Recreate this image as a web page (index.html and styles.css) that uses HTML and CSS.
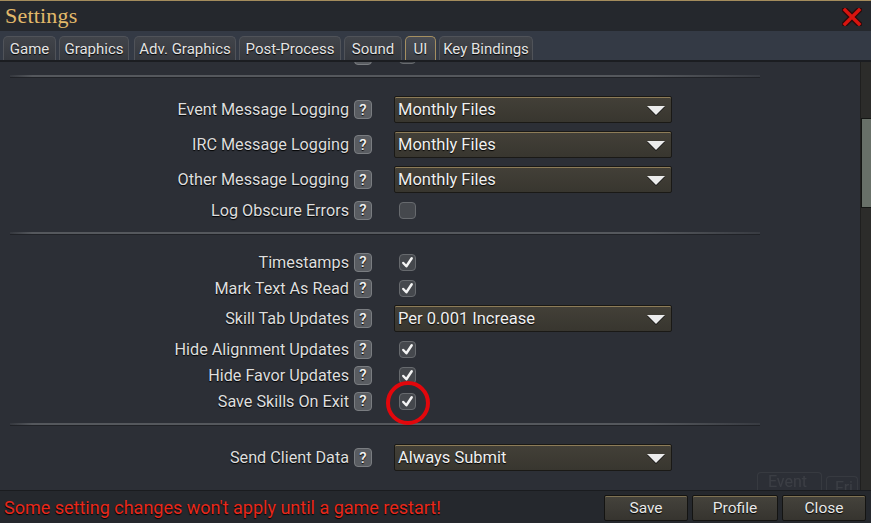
FILE: index.html
```html
<!DOCTYPE html>
<html>
<head>
<meta charset="utf-8">
<link rel="stylesheet" href="styles.css">
</head>
<body>
<div class="window">
  <header class="titlebar">
    <span class="title">Settings</span>
    <svg class="close" width="20" height="18" viewBox="0 0 20 18">
      <path d="M3 2 L17 16 M17 2 L3 16" stroke="#2a0a0a" stroke-width="6" stroke-linecap="square"/>
      <path d="M3 2 L17 16 M17 2 L3 16" stroke="#d8140f" stroke-width="3.4" stroke-linecap="square"/>
    </svg>
  </header>
  <nav class="tabs">
    <span class="tab t-game">Game</span>
    <span class="tab t-graphics">Graphics</span>
    <span class="tab t-adv">Adv. Graphics</span>
    <span class="tab t-post">Post-Process</span>
    <span class="tab t-sound">Sound</span>
    <span class="tab t-ui active">UI</span>
    <span class="tab t-keys">Key Bindings</span>
  </nav>
  <main class="body">
    <div class="scroll-area">
      <div class="list">
        <div class="row cb-row partial"><span class="label"></span><span class="help"></span><span class="check"></span></div>
        <div class="divider first"></div>

        <div class="row dd-row"><span class="label">Event Message Logging</span><span class="help">?</span><span class="dropdown">Monthly Files<i class="tri"></i></span></div>
        <div class="row dd-row"><span class="label">IRC Message Logging</span><span class="help">?</span><span class="dropdown">Monthly Files<i class="tri"></i></span></div>
        <div class="row dd-row"><span class="label">Other Message Logging</span><span class="help">?</span><span class="dropdown">Monthly Files<i class="tri"></i></span></div>
        <div class="row cb-row"><span class="label">Log Obscure Errors</span><span class="help">?</span><span class="check"></span></div>
        <div class="divider"></div>

        <div class="row cb-row"><span class="label">Timestamps</span><span class="help">?</span><span class="check on"><svg viewBox="0 0 16 16"><path d="M3.5 8.5 L6.8 12 L12.5 3.5" fill="none" stroke="#f4f4f4" stroke-width="2.6" stroke-linecap="round" stroke-linejoin="round"/></svg></span></div>
        <div class="row cb-row"><span class="label">Mark Text As Read</span><span class="help">?</span><span class="check on"><svg viewBox="0 0 16 16"><path d="M3.5 8.5 L6.8 12 L12.5 3.5" fill="none" stroke="#f4f4f4" stroke-width="2.6" stroke-linecap="round" stroke-linejoin="round"/></svg></span></div>
        <div class="row dd-row"><span class="label">Skill Tab Updates</span><span class="help">?</span><span class="dropdown">Per 0.001 Increase<i class="tri"></i></span></div>
        <div class="row cb-row"><span class="label">Hide Alignment Updates</span><span class="help">?</span><span class="check on"><svg viewBox="0 0 16 16"><path d="M3.5 8.5 L6.8 12 L12.5 3.5" fill="none" stroke="#f4f4f4" stroke-width="2.6" stroke-linecap="round" stroke-linejoin="round"/></svg></span></div>
        <div class="row cb-row"><span class="label">Hide Favor Updates</span><span class="help">?</span><span class="check on"><svg viewBox="0 0 16 16"><path d="M3.5 8.5 L6.8 12 L12.5 3.5" fill="none" stroke="#f4f4f4" stroke-width="2.6" stroke-linecap="round" stroke-linejoin="round"/></svg></span></div>
        <div class="row cb-row"><span class="label">Save Skills On Exit</span><span class="help">?</span><span class="check on"><svg viewBox="0 0 16 16"><path d="M3.5 8.5 L6.8 12 L12.5 3.5" fill="none" stroke="#f4f4f4" stroke-width="2.6" stroke-linecap="round" stroke-linejoin="round"/></svg><i class="ring"></i></span></div>
        <div class="divider"></div>

        <div class="row dd-row"><span class="label">Send Client Data</span><span class="help">?</span><span class="dropdown">Always Submit<i class="tri"></i></span></div>
      </div>
      <div class="ghost"><span class="ghost-tab">Event</span><span class="ghost-tab2">Fri</span></div>
    </div>
    <div class="scrollbar"><div class="thumb"></div></div>
  </main>
  <footer class="footer">
    <span class="warning">Some setting changes won't apply until a game restart!</span>
    <div class="buttons">
      <span class="btn btn-save">Save</span>
      <span class="btn btn-profile">Profile</span>
      <span class="btn btn-close">Close</span>
    </div>
  </footer>
</div>
</body>
</html>
```
FILE: styles.css
```css
* { box-sizing: border-box; }
html, body { margin: 0; padding: 0; }
body {
  width: 871px;
  height: 523px;
  overflow: hidden;
  background: #2b2e35;
  font-family: Roboto, "Liberation Sans", sans-serif;
}
.window {
  width: 871px;
  height: 523px;
  display: flex;
  flex-direction: column;
}
.titlebar {
  height: 31px;
  flex: none;
  border-top: 1px solid #a48c5c;
  background: #25282d;
  display: flex;
  align-items: center;
  justify-content: space-between;
  padding: 0 9px 0 5px;
}
.title {
  font-family: "Liberation Serif", "DejaVu Serif", serif;
  font-size: 22px;
  color: #e2b96a;
  letter-spacing: 0.2px;
  margin-top: -1px;
}
.close { display: block; margin-top: 1px; }
.tabs {
  height: 31px;
  flex: none;
  background: #343a45;
  border-bottom: 2px solid #1b1d21;
  display: flex;
  align-items: flex-end;
  padding: 0 0 0 3px;
}
.tab {
  height: 24px;
  margin-right: 3px;
  display: flex;
  align-items: center;
  justify-content: center;
  font-size: 15px;
  color: #e4e4e4;
  background: linear-gradient(#41444a, #36393f);
  border: 1px solid #505359;
  border-bottom: none;
  border-radius: 5px 5px 0 0;
  text-shadow: 0 1px 1px #000;
}
.t-game { width: 53px; }
.t-graphics { width: 70px; margin-right: 5px; }
.t-adv { width: 102px; }
.t-post { width: 102px; }
.t-sound { width: 58px; }
.t-ui { width: 31px; }
.t-keys { width: 94px; }
.tab.active {
  border-color: #a58f60;
  background: linear-gradient(#4a4d54, #3e4147);
}
.body {
  flex: 1;
  display: flex;
  min-height: 0;
  background: #2c2f36;
}
.scroll-area {
  flex: 1;
  overflow: hidden;
  position: relative;
}
.scrollbar {
  width: 11px;
  flex: none;
  background: #2c2c2a;
  border-left: 1px solid #1f1f1e;
  padding-top: 56px;
}
.thumb {
  height: 90px;
  background: #687068;
  border: 1px solid #141614;
  border-right: none;
}
.list {
  display: flex;
  flex-direction: column;
}
.row {
  display: flex;
  align-items: center;
}
.partial { margin-top: -20px; }
.dd-row { height: 35px; }
.cb-row { height: 26px; }
.label {
  width: 349px;
  text-align: right;
  font-size: 16.2px;
  color: #dedede;
  text-shadow: 0 1px 1px #000;
}
.help {
  width: 18px;
  height: 19px;
  margin-left: 5px;
  border-radius: 4px;
  background: #595c61;
  border: 1px solid #7a7d81;
  color: #f4f4f4;
  font-size: 15px;
  font-weight: 500;
  display: flex;
  align-items: center;
  justify-content: center;
  text-shadow: 0 1px 1px #000;
}
.dropdown {
  position: relative;
  width: 278px;
  height: 27px;
  margin-left: 22px;
  background: linear-gradient(#434038, #38362f);
  border: 1px solid #1a1916;
  border-radius: 2px;
  box-shadow: inset 0 1px 0 #8d7c58;
  color: #f0f0f0;
  font-size: 16.5px;
  display: flex;
  align-items: center;
  padding-left: 3px;
  text-shadow: 0 1px 1px #000;
}
.tri {
  position: absolute;
  right: 6px;
  top: 9px;
  width: 0;
  height: 0;
  border-left: 9px solid transparent;
  border-right: 9px solid transparent;
  border-top: 9px solid #ececec;
  filter: drop-shadow(0 1px 0 #111);
}
.check {
  position: relative;
  width: 17px;
  height: 17px;
  margin-left: 27px;
  border-radius: 4px;
  background: #45484d;
  border: 1px solid #676a6e;
  display: flex;
  align-items: center;
  justify-content: center;
}
.check svg { width: 15px; height: 15px; display: block; }
.ring {
  position: absolute;
  left: -14px;
  top: -13px;
  width: 44px;
  height: 44px;
  border: 4px solid #e2070c;
  border-radius: 50%;
}
.divider {
  height: 2px;
  margin: 9px 100px 15px 10px;
  background: linear-gradient(90deg, rgba(85,88,93,0.2), #55585d 3%, #55585d 85%, rgba(85,88,93,0.3));
  box-shadow: 0 1px 0 #202227;
}
.divider.first { margin-top: 7px; }
.ghost {
  position: absolute;
  right: 2px;
  bottom: 0;
  display: flex;
  align-items: flex-end;
  gap: 4px;
  opacity: 0.1;
}
.ghost-tab, .ghost-tab2 {
  font-size: 16px;
  color: #c0c0c0;
  border: 1px solid #999;
  border-bottom: none;
  border-radius: 4px 4px 0 0;
  padding: 0 14px 0 10px;
  height: 18px;
  line-height: 18px;
}
.ghost-tab2 { padding: 2px 4px 0 8px; height: 14px; }
.footer {
  height: 33px;
  flex: none;
  background: #25282d;
  border-top: 1px solid #1a1c1f;
  display: flex;
  align-items: center;
  justify-content: space-between;
  padding: 0 5px 0 4px;
}
.warning {
  color: #e8281b;
  font-size: 18px;
  text-shadow: 0 1px 1px #000;
}
.buttons {
  display: flex;
  gap: 4px;
  margin-top: 1px;
}
.btn {
  height: 26px;
  width: 84px;
  display: flex;
  align-items: center;
  justify-content: center;
  font-size: 15.5px;
  color: #e8e8e8;
  background: linear-gradient(#45433c, #36342f);
  border: 1px solid #141412;
  box-shadow: inset 0 1px 0 #7f7253;
  border-radius: 2px;
  text-shadow: 0 1px 1px #000;
}
.btn-profile { width: 86px; }
```
